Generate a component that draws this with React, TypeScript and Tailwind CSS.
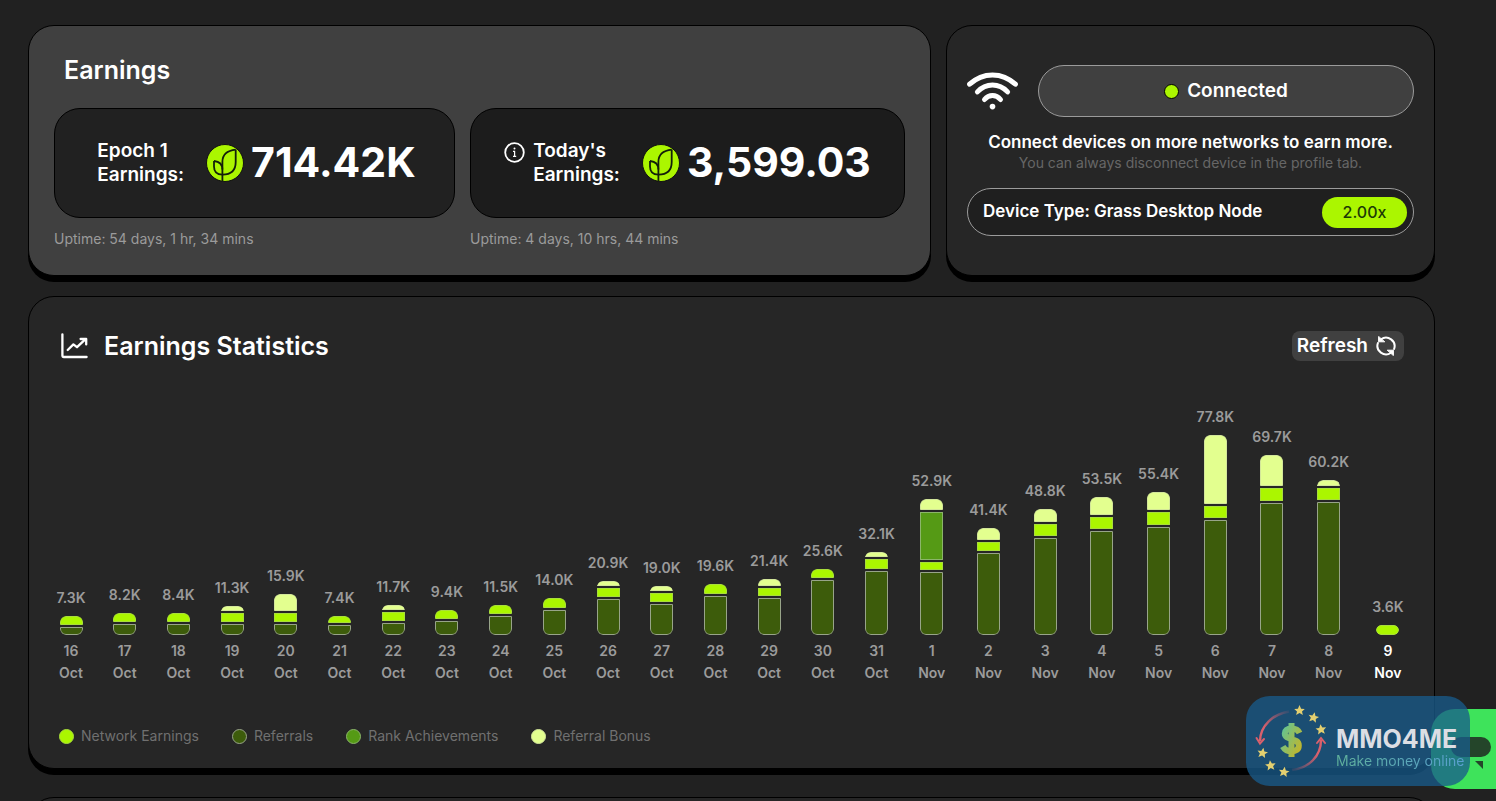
import clsx from "clsx";

type Kind = "bonus" | "rank" | "network" | "referral";

type Day = {
  day: string;
  month: string;
  total: string;
  // segment heights in pixels, top to bottom
  parts: [Kind, number][];
};

const days: Day[] = [
  { day: "16", month: "Oct", total: "7.3K", parts: [["network", 9], ["referral", 8]] },
  { day: "17", month: "Oct", total: "8.2K", parts: [["network", 9], ["referral", 11]] },
  { day: "18", month: "Oct", total: "8.4K", parts: [["network", 9], ["referral", 11]] },
  { day: "19", month: "Oct", total: "11.3K", parts: [["bonus", 5], ["network", 9], ["referral", 11]] },
  { day: "20", month: "Oct", total: "15.9K", parts: [["bonus", 17], ["network", 9], ["referral", 11]] },
  { day: "21", month: "Oct", total: "7.4K", parts: [["network", 7], ["referral", 10]] },
  { day: "22", month: "Oct", total: "11.7K", parts: [["bonus", 5], ["network", 9], ["referral", 12]] },
  { day: "23", month: "Oct", total: "9.4K", parts: [["network", 9], ["referral", 14]] },
  { day: "24", month: "Oct", total: "11.5K", parts: [["network", 9], ["referral", 19]] },
  { day: "25", month: "Oct", total: "14.0K", parts: [["network", 10], ["referral", 25]] },
  { day: "26", month: "Oct", total: "20.9K", parts: [["bonus", 5], ["network", 9], ["referral", 36]] },
  { day: "27", month: "Oct", total: "19.0K", parts: [["bonus", 5], ["network", 9], ["referral", 31]] },
  { day: "28", month: "Oct", total: "19.6K", parts: [["network", 10], ["referral", 39]] },
  { day: "29", month: "Oct", total: "21.4K", parts: [["bonus", 7], ["network", 8], ["referral", 37]] },
  { day: "30", month: "Oct", total: "25.6K", parts: [["network", 9], ["referral", 55]] },
  { day: "31", month: "Oct", total: "32.1K", parts: [["bonus", 5], ["network", 10], ["referral", 64]] },
  { day: "1", month: "Nov", total: "52.9K", parts: [["bonus", 11], ["rank", 48], ["network", 8], ["referral", 63]] },
  { day: "2", month: "Nov", total: "41.4K", parts: [["bonus", 12], ["network", 9], ["referral", 82]] },
  { day: "3", month: "Nov", total: "48.8K", parts: [["bonus", 13], ["network", 12], ["referral", 97]] },
  { day: "4", month: "Nov", total: "53.5K", parts: [["bonus", 18], ["network", 12], ["referral", 104]] },
  { day: "5", month: "Nov", total: "55.4K", parts: [["bonus", 18], ["network", 13], ["referral", 108]] },
  { day: "6", month: "Nov", total: "77.8K", parts: [["bonus", 69], ["network", 12], ["referral", 115]] },
  { day: "7", month: "Nov", total: "69.7K", parts: [["bonus", 31], ["network", 13], ["referral", 132]] },
  { day: "8", month: "Nov", total: "60.2K", parts: [["bonus", 6], ["network", 12], ["referral", 133]] },
  { day: "9", month: "Nov", total: "3.6K", parts: [["network", 10]] },
];

const fills: Record<Kind, string> = {
  bonus: "bg-[#e3ff8f] border-[#d3e69a]",
  rank: "bg-[#559a15] border-[#8bb56a]",
  network: "bg-[#abf600] border-[#a9dd3c]",
  referral: "bg-[#3d5c0b] border-[#98a489]",
};

const legend: { kind: Kind; label: string }[] = [
  { kind: "network", label: "Network Earnings" },
  { kind: "referral", label: "Referrals" },
  { kind: "rank", label: "Rank Achievements" },
  { kind: "bonus", label: "Referral Bonus" },
];

const CoinIcon = () => (
  <svg viewBox="0 0 38 38" className="size-[38px] shrink-0" fill="none" stroke="#14210a" strokeWidth="1.8">
    <circle cx="19" cy="19" r="18.5" fill="#abf600" stroke="#121212" strokeWidth="1" />
    <path d="M29.7 5.6C21 6.5 16.4 11 16.4 18V37" />
    <path d="M29.7 5.6V18C29.7 26 25 30.6 16.4 30.6" />
    <path d="M8 17V22.5C8 28 11 30.6 16.4 30.6" />
    <path d="M8 17C13 17.5 16.4 20.5 16.4 25.5" />
  </svg>
);

const InfoIcon = () => (
  <svg viewBox="0 0 21 21" className="mt-[3px] size-[21px] shrink-0" fill="none" stroke="#fff">
    <circle cx="10.5" cy="10.5" r="9.3" strokeWidth="1.8" />
    <path d="M9 9.4H10.6V14.4M9 14.4H12.2" strokeWidth="1.2" />
    <circle cx="10.5" cy="6.6" r="1" fill="#fff" stroke="none" />
  </svg>
);

const WifiIcon = () => (
  <svg viewBox="0 0 51 38" className="h-[38px] w-[51px] shrink-0" fill="none" stroke="#fff" strokeWidth="5" strokeLinecap="round">
    <path d="M2.6 12.2C16 -.2 35 -.2 48.4 12.2" />
    <path d="M10.4 19.9C19 10.8 32 10.8 40.6 19.9" />
    <path d="M17.5 27.5C22 22 29 22 33.5 27.5" />
    <circle cx="25.5" cy="34.6" r="2.8" fill="#fff" stroke="none" />
  </svg>
);

const TrendIcon = () => (
  <svg viewBox="0 0 28 26" className="h-[26px] w-7 shrink-0" fill="none" stroke="#fff" strokeWidth="2.3" strokeLinecap="round" strokeLinejoin="round">
    <path d="M1.4 1.3V22.6Q1.4 24 2.8 24H25.6" />
    <path d="M6.7 17L12.4 11.4L16 14.2L24 6.6" />
    <path d="M19.6 6H25.2V11.4" />
  </svg>
);

const RefreshIcon = () => (
  <svg viewBox="0 0 20 20" className="size-5 shrink-0" fill="none" stroke="#fff" strokeWidth="2" strokeLinecap="round">
    <path d="M5 3.2A8.6 8.6 0 0 1 18.1 13" />
    <path d="M15 16.8A8.6 8.6 0 0 1 1.9 7" />
    <path d="M2.6.8L2.6 5.8H8.4Z" fill="#fff" strokeWidth="1" strokeLinejoin="round" />
    <path d="M17.4 19.2L17.4 14.2H11.6Z" fill="#fff" strokeWidth="1" strokeLinejoin="round" />
  </svg>
);

const Bar = ({ item, current }: { item: Day; current: boolean }) => (
  <div
    className={clsx(
      "flex flex-col items-center text-sm font-semibold",
      item.month === "Oct" ? "w-6" : current ? "w-8" : "w-[27px]"
    )}
  >
    <span className="mb-2 text-[#9b9b9b] leading-5">{item.total}</span>
    <div
      className={clsx(
        "flex w-[23px] flex-col gap-0.5 overflow-hidden",
        current ? "rounded-full" : "rounded-md"
      )}
    >
      {item.parts.map(([kind, height], index) => (
        <div
          key={kind}
          className={clsx(
            "border",
            fills[kind],
            index === 0 && "rounded-t-md",
            index === item.parts.length - 1 && "rounded-b-md"
          )}
          style={{ height }}
        />
      ))}
    </div>
    <span className={clsx("mt-[5px] text-center leading-[22px]", current ? "text-white" : "text-[#9b9b9b]")}>
      {item.day}
      <br />
      {item.month}
    </span>
  </div>
);

const Star = ({ x, y, r }: { x: number; y: number; r: number }) => (
  <path
    transform={`translate(${x} ${y}) rotate(${r})`}
    d="M0-5.4L1.6-1.8L5.3-1.6L2.5.9L3.4 4.6L0 2.6L-3.4 4.6L-2.5.9L-5.3-1.6L-1.6-1.8Z"
    fill="#e3cf70"
  />
);

const Watermark = () => (
  <div className="absolute right-[26px] bottom-[15px] flex h-[90px] w-56 items-center rounded-3xl bg-[#195b8b]/77">
    <svg viewBox="0 0 90 90" className="size-[90px] shrink-0" fill="none">
      <defs>
        <linearGradient id="dollar" x1="0" y1="0" x2="1" y2="1">
          <stop offset="0" stopColor="#5cc59a" />
          <stop offset="1" stopColor="#c9b524" />
        </linearGradient>
        <linearGradient id="arcLeft" x1="0" y1="1" x2="1" y2="0">
          <stop offset="0.3" stopColor="#d9606c" />
          <stop offset="1" stopColor="#d9606c" stopOpacity="0.1" />
        </linearGradient>
        <linearGradient id="arcRight" x1="1" y1="0" x2="0" y2="1">
          <stop offset="0.3" stopColor="#d9606c" />
          <stop offset="1" stopColor="#d9606c" stopOpacity="0.1" />
        </linearGradient>
      </defs>
      <path d="M43 15.5C27 18 14 30 14 45" stroke="url(#arcLeft)" strokeWidth="2.4" />
      <path d="M10.5 42L14 47.5L18 43" stroke="#d9606c" strokeWidth="2" strokeLinecap="round" />
      <path d="M46 74C63 72 75 60 75 44" stroke="url(#arcRight)" strokeWidth="2.4" />
      <path d="M71 47L75 42L79 47" stroke="#d9606c" strokeWidth="2" strokeLinecap="round" />
      <path
        d="M53.5 37C52 33.5 49 32.5 45.5 32.5C41 32.5 38.8 34.5 38.8 37.5C38.8 45 52.8 41 52.8 49.5C52.8 53.5 50 55.5 45.5 55.5C41.5 55.5 38.8 54 36.8 50.5M45.5 27V61"
        stroke="url(#dollar)"
        strokeWidth="6"
        strokeLinejoin="round"
      />
      <Star x={53.5} y={14.5} r={0} />
      <Star x={67.5} y={21.5} r={12} />
      <Star x={75} y={33.5} r={-6} />
      <Star x={16.5} y={57} r={10} />
      <Star x={24.5} y={69.5} r={-6} />
      <Star x={38} y={76} r={8} />
    </svg>
    <div className="flex flex-col pt-[14px]">
      <span className="text-[25px] leading-[26px] font-bold text-[#dcdee4]">MMO4ME</span>
      <span className="bg-linear-to-r from-[#5fb09a] to-[#5a9fd0] bg-clip-text text-sm leading-[18px] text-transparent">
        Make money online
      </span>
    </div>
  </div>
);

const App = () => {
  return (
    <div className="relative h-screen overflow-hidden bg-[#212121] pt-[25px] pr-[61px] pl-7 font-[Inter,sans-serif] text-white">
      <div className="grid grid-cols-[903fr_489fr] gap-[15px]">
        <section className="rounded-[26px] border border-black bg-[#404040] px-[25px] pt-7 pb-[26px] shadow-[0_6px_0_#000]">
          <h2 className="pl-[10px] text-[25px] leading-8 font-semibold">Earnings</h2>
          <div className="mt-[22px] grid grid-cols-[401fr_435fr] gap-x-[15px]">
            <div>
              <div className="flex h-[110px] items-center justify-center rounded-[26px] border border-black bg-[#212121] pl-1">
                <p className="text-[19px] leading-6 font-semibold">
                  Epoch 1
                  <br />
                  Earnings:
                </p>
                <div className="ml-[22px] flex items-center gap-[7px]">
                  <CoinIcon />
                  <span className="text-[41px] font-bold">714.42K</span>
                </div>
              </div>
              <p className="mt-[11px] text-sm text-[#9b9b9b]">Uptime: 54 days, 1 hr, 34 mins</p>
            </div>
            <div>
              <div className="flex h-[110px] items-center justify-center rounded-[26px] border border-black bg-[#1c1c1c]">
                <div className="flex gap-2">
                  <InfoIcon />
                  <p className="text-[19px] leading-6 font-semibold">
                    Today's
                    <br />
                    Earnings:
                  </p>
                </div>
                <div className="ml-[22px] flex items-center gap-[7px]">
                  <CoinIcon />
                  <span className="text-[41px] font-bold">3,599.03</span>
                </div>
              </div>
              <p className="mt-[11px] text-sm text-[#9b9b9b]">Uptime: 4 days, 10 hrs, 44 mins</p>
            </div>
          </div>
        </section>

        <section className="rounded-[26px] border border-black bg-[#262626] px-5 pt-[39px] shadow-[0_6px_0_#000]">
          <div className="flex items-center gap-5">
            <WifiIcon />
            <button className="flex h-[52px] flex-1 items-center justify-center gap-2 rounded-full border border-[#9b9b9b] bg-[#404040] text-[19px] font-semibold">
              <span className="size-[15px] rounded-full border border-black bg-[#abf600]" />
              Connected
            </button>
          </div>
          <p className="mt-[13px] text-center text-[17px] leading-6 font-semibold">
            Connect devices on more networks to earn more.
          </p>
          <p className="text-center text-sm leading-[18px] text-[#666]">
            You can always disconnect device in the profile tab.
          </p>
          <div className="mt-4 flex h-12 items-center justify-between rounded-full border border-[#9b9b9b] bg-[#1f1f1f] pr-[6px] pl-[15px]">
            <span className="flex gap-1 text-[17px] font-semibold">
              <span>Device Type:</span>
              <span>Grass Desktop Node</span>
            </span>
            <span className="flex h-[31px] w-[85px] items-center justify-center rounded-full bg-[#abf600] font-medium text-[#1c3a05]">
              2.00x
            </span>
          </div>
        </section>
      </div>

      <section className="mt-5 rounded-[26px] border border-black bg-[#262626] px-[30px] pt-[33px] pb-[22px] shadow-[0_6px_0_#000]">
        <div className="flex items-center justify-between">
          <h2 className="flex items-center gap-[15px] pl-0.5 text-[25px] leading-8 font-semibold">
            <TrendIcon />
            Earnings Statistics
          </h2>
          <button className="flex h-[30px] items-center gap-2 rounded-lg bg-[#404040] pr-2 pl-[5px] text-[19px] font-semibold">
            Refresh
            <RefreshIcon />
          </button>
        </div>
        <div className="mt-[45px] flex items-end justify-between">
          {days.map((item, index) => (
            <Bar key={item.day + item.month} item={item} current={index === days.length - 1} />
          ))}
        </div>
        <ul className="mt-[42px] flex gap-[33px] text-sm text-[#707070]">
          {legend.map((item) => (
            <li key={item.kind} className="flex items-center gap-[7px]">
              <span className={clsx("size-[15px] rounded-full border", fills[item.kind])} />
              {item.label}
            </li>
          ))}
        </ul>
      </section>

      <section className="mt-7 h-20 rounded-[26px] border border-black bg-[#262626]" />

      {/* chat bubble, partly off the right edge */}
      <div className="absolute right-0 bottom-3 h-20 w-[65px] rounded-l-3xl bg-[#3ee35b]">
        <div className="absolute top-7 right-[5px] h-5 w-10 rounded-full bg-[#24452a]" />
        <svg viewBox="0 0 8 8" className="absolute top-[52px] right-[13px] size-2">
          <path d="M0 0H8V8Z" fill="#24452a" />
        </svg>
      </div>
      <Watermark />
    </div>
  );
};

export default App;
